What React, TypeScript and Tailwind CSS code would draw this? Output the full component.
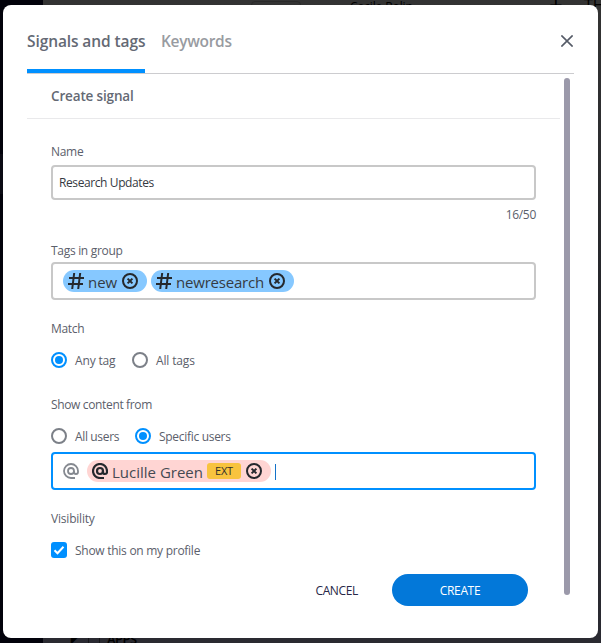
import type { ReactNode } from "react";

function Label({ children, className }: { children: ReactNode; className: string }) {
  return <div className={`whitespace-nowrap text-[12px] leading-4 text-[#5b606b] ${className}`}>{children}</div>;
}

function HashIcon() {
  return (
    <svg className="h-4 w-4 shrink-0" viewBox="0 0 16 16" fill="none" stroke="#25282d" strokeWidth="2">
      <path d="M6.2 0 4.2 16M12.2 0l-2 16M1 5h15M0 11h15" />
    </svg>
  );
}

function AtIcon({ color, weight }: { color: string; weight: number }) {
  return (
    <svg className="h-4 w-4 shrink-0" viewBox="0 0 16 16" fill="none" stroke={color} strokeWidth={weight}>
      <circle cx="8" cy="8" r="3" />
      <path d="M12 15H8a7 7 0 1 1 7-7v1a2 2 0 0 1-4 0V8" />
    </svg>
  );
}

function RemoveIcon() {
  return (
    <svg className="h-4 w-4 shrink-0" viewBox="0 0 16 16" fill="none" stroke="#25282d" strokeWidth="2">
      <circle cx="8" cy="8" r="7" />
      <path d="m5.6 5.6 4.8 4.8m0-4.8-4.8 4.8" />
    </svg>
  );
}

function Radio({ checked }: { checked?: boolean }) {
  return (
    <span
      className={`flex h-4 w-4 shrink-0 items-center justify-center rounded-full border-2 ${
        checked ? "border-[#0090ff]" : "border-[#7c8088]"
      }`}
    >
      {checked && <span className="h-2 w-2 rounded-full bg-[#0090ff]" />}
    </span>
  );
}

function Tag({ text, className, textClass }: { text: string; className: string; textClass: string }) {
  return (
    <div className={`flex h-[22px] shrink-0 items-center rounded-full bg-[#86c8ff] pl-[5px] ${className}`}>
      <HashIcon />
      <span className={`ml-1 mt-px shrink-0 whitespace-nowrap text-[15px] leading-5 text-[#353b43] ${textClass}`}>{text}</span>
      <RemoveIcon />
    </div>
  );
}

function Backdrop() {
  return (
    <div className="flex h-full w-full bg-[#02020b]">
      <div className="flex w-[43px] shrink-0 flex-col pt-[154px]">
        <div className="h-10 bg-[#0b0b14]" />
      </div>
      <div className="flex w-[558px] shrink-0 flex-col justify-between bg-gradient-to-b from-[#333333] via-[#25262b] to-[#2a2a31]">
        <div className="flex h-5 whitespace-nowrap text-[12px] leading-[13px] text-black">
          <div className="ml-[208px] mt-[1px] h-6 w-[50px] shrink-0 rounded border border-[#292929]" />
          <span className="ml-[49px] w-[67px] shrink-0 tracking-[-0.1px]">Cecile Rolin</span>
          <span className="ml-[132px] w-[18px] shrink-0 text-[24px] leading-[10px]">+</span>
          <span className="ml-[17px] text-[16px] leading-[10px]">TH</span>
        </div>
        <div className="flex h-2 items-center whitespace-nowrap text-[13px] font-semibold leading-[6px] text-black">
          <span className="ml-[28px] text-[10px]">◤</span>
          <span className="ml-[9px] h-4 w-3 rounded border border-[#171719]" />
          <span className="ml-[7px] tracking-[-0.5px]">APPS</span>
        </div>
      </div>
    </div>
  );
}

export default function App() {
  return (
    <div className="relative h-[643px] w-[601px] overflow-hidden font-['Open_Sans','Noto_Sans',sans-serif]">
      <Backdrop />
      <div className="absolute left-[3px] top-[5px] flex h-[633px] w-[595px] flex-col rounded-[8px] bg-white px-6">
        <div className="flex h-[69px] w-[547px] shrink-0 justify-between border-b border-[#cccccf]">
          <div className="flex gap-4 text-[15.5px] font-semibold leading-5">
            <div className="h-[68px] w-[118px] whitespace-nowrap border-b-4 border-[#0090ff] pt-[26px] tracking-[-0.1px] text-[#646974]">
              Signals and tags
            </div>
            <div className="whitespace-nowrap pt-[26px] tracking-[-0.3px] text-[#989ba1]">Keywords</div>
          </div>
          <svg className="mr-[1px] mt-[30px] h-3 w-3" viewBox="0 0 12 12" fill="none" stroke="#555b67" strokeWidth="1.6">
            <path d="m.4.4 11.2 11.2m0-11.2L.4 11.6" />
          </svg>
        </div>

        <div className="flex h-[559px] shrink-0">
          <div className="flex w-[533px] shrink-0 flex-col">
            <div className="h-[45px] shrink-0 border-b border-[#e9e9eb] pl-6 pt-3 text-[13.5px] font-semibold leading-5 text-[#646974]">
              <span className="tracking-[-0.15px]">Create signal</span>
            </div>

            <div className="flex w-[509px] flex-col pl-6">
              <Label className="mt-[25px] tracking-[-0.3px]">Name</Label>
              <div className="mt-[5px] flex h-[35px] items-center rounded-[4px] border-2 border-[#c8c8c8] pl-1.5 text-[12px] tracking-[-0.4px] text-[#353a42]">
                <span>Research Updates</span>
              </div>
              <Label className="mt-[7px] text-right tracking-[-0.3px]">16/50</Label>

              <Label className="mt-5 tracking-[-0.3px]">Tags in group</Label>
              <div className="mt-[3px] flex h-[38px] items-start gap-1 rounded-[4px] border-2 border-[#c8c8c8] pl-2.5 pt-1.5">
                <Tag text="new" className="w-[84px]" textClass="w-[34px]" />
                <Tag text="newresearch" className="w-[143px]" textClass="w-[93px] tracking-[-0.2px]" />
              </div>

              <Label className="mt-[21px] tracking-[-0.3px]">Match</Label>
              <div className="mt-[15px] flex h-4 items-center">
                <Radio checked />
                <Label className="ml-2 mt-0.5 w-[57px] tracking-[-0.15px]">Any tag</Label>
                <Radio />
                <Label className="ml-2 mt-0.5 tracking-[-0.15px]">All tags</Label>
              </div>

              <Label className="mt-[29px] tracking-[-0.35px]">Show content from</Label>
              <div className="mt-[15px] flex h-4 items-center">
                <Radio />
                <Label className="ml-2 mt-0.5 w-[60px] tracking-[-0.35px]">All users</Label>
                <Radio checked />
                <Label className="ml-2 mt-0.5 tracking-[-0.3px]">Specific users</Label>
              </div>
              <div className="mt-2 flex h-[38px] items-start rounded-[4px] border-2 border-[#0090ff] pl-2.5 pt-1.5">
                <div className="mr-2 pt-[3px]">
                  <AtIcon color="#858990" weight={1.8} />
                </div>
                <div className="flex h-[22px] w-[184px] items-center rounded-full bg-[#ffd5d3] pl-[5px]">
                  <AtIcon color="#25282d" weight={2.2} />
                  <span className="ml-1 mt-px w-[95px] whitespace-nowrap text-[15px] leading-5 text-[#454a52]">Lucille Green</span>
                  <span className="mr-[5px] flex h-4 w-[34px] items-center justify-center rounded-[3px] bg-[#f8c33e] text-[11px] tracking-[-0.2px] text-[#32302a]">
                    EXT
                  </span>
                  <RemoveIcon />
                </div>
                <span className="ml-1 mt-1 h-4 w-px bg-[#1473c9]" />
              </div>

              <Label className="mt-[21px] tracking-[-0.2px]">Visibility</Label>
              <div className="mt-[15px] flex h-4 items-center">
                <span className="flex h-4 w-4 items-center justify-center rounded-[3px] bg-[#0090ff]">
                  <svg className="h-4 w-4" viewBox="0 0 16 16" fill="none" stroke="white" strokeWidth="2">
                    <path d="m3.5 8.2 3 3 6-6.4" />
                  </svg>
                </span>
                <Label className="ml-2 mt-0.5 tracking-[-0.27px]">Show this on my profile</Label>
              </div>

              <div className="mt-4 flex h-8 items-center justify-end pr-2 text-[12px] tracking-[-0.35px]">
                <button className="mr-[34px] pt-0.5 text-[#272747]">CANCEL</button>
                <button className="h-8 w-[136px] rounded-full bg-[#0378d9] pt-0.5 text-white">CREATE</button>
              </div>
            </div>
          </div>
          <div className="ml-1 mt-1 h-[517px] w-1.5 rounded-full bg-[#9b99aa]" />
        </div>
      </div>
    </div>
  );
}
